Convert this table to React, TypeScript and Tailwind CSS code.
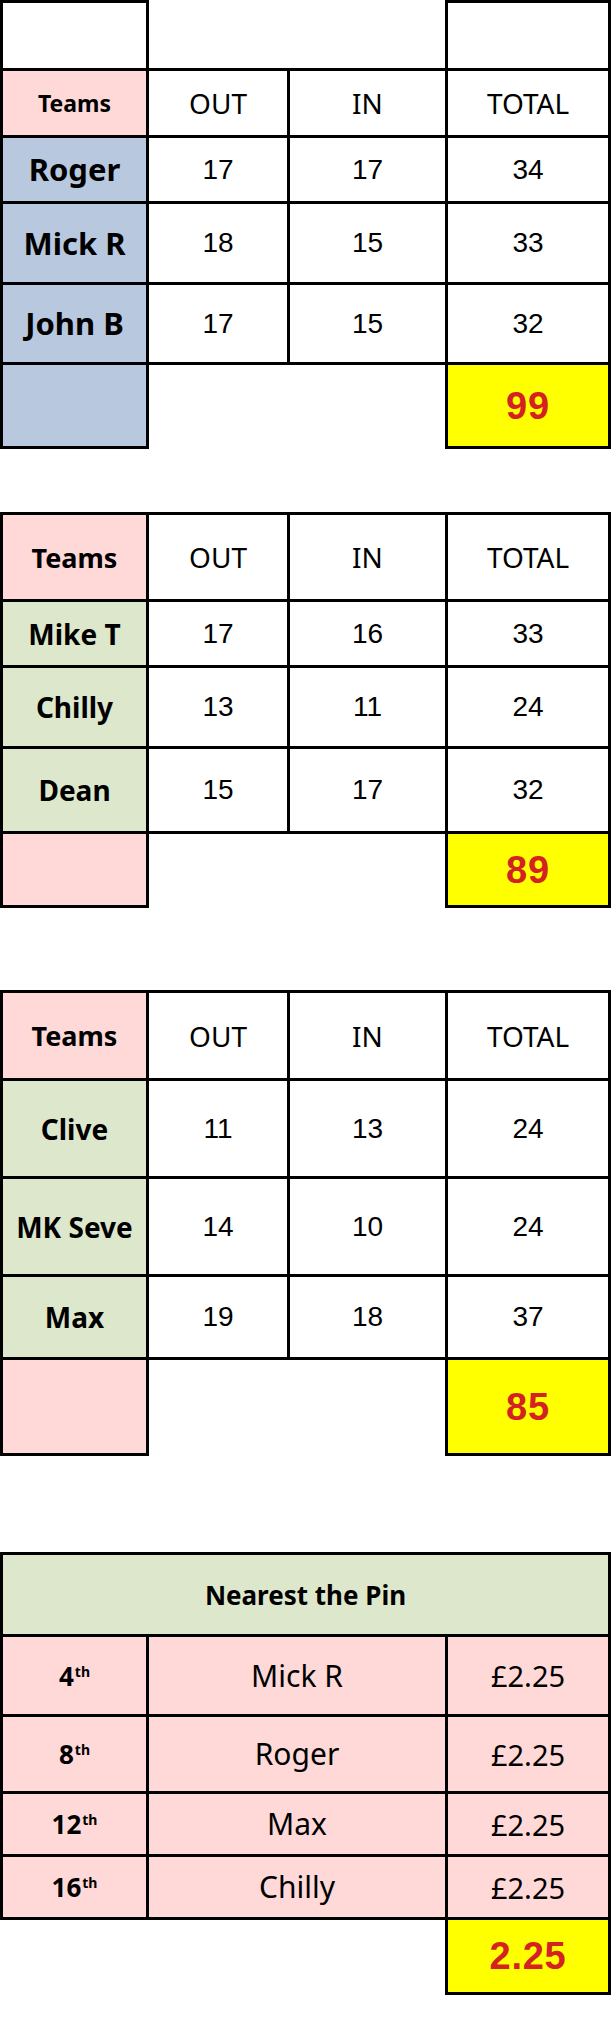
import React from "react";

const COMIC = "font-['Comic_Sans_MS','Noto_Sans',sans-serif]";
const ARIAL = "font-['Liberation_Sans',Arial,sans-serif]";

type CProps = { cls?: string; children?: React.ReactNode };
function C({ cls = "", children }: CProps) {
  return (
    <div className={`flex items-center justify-center border-black text-black ${cls}`}>
      {children}
    </div>
  );
}

const STD = "border-l-[3px] border-t-[3px]";
const LAST = "border-l-[3px] border-r-[3px] border-t-[3px]";
const PINK = "bg-[#ffd8d8]";
const BLUE = "bg-[#b8c9df]";
const GREEN = "bg-[#dde7cb]";
const YELLOW = "bg-[#ffff00]";

function Num({ children }: { children: React.ReactNode }) {
  return <span className={`${ARIAL} text-[28px] leading-none`}>{children}</span>;
}

function Red({ children }: { children: React.ReactNode }) {
  return (
    <span className={`${ARIAL} text-[38px] font-bold leading-none tracking-[0.02em] text-[#d42222]`}>
      {children}
    </span>
  );
}

function HeaderRow({ teamsSize }: { teamsSize: string }) {
  return (
    <>
      <C cls={`${STD} ${PINK}`}>
        <span className={`${COMIC} ${teamsSize} font-bold leading-none`}>Teams</span>
      </C>
      <C cls={STD}>
        <span className={`${COMIC} text-[28px] leading-none`}>OUT</span>
      </C>
      <C cls={STD}>
        <span className={`${COMIC} text-[28px] leading-none`}>IN</span>
      </C>
      <C cls={LAST}>
        <span className={`${COMIC} text-[28px] leading-none`}>TOTAL</span>
      </C>
    </>
  );
}

function DataRow({
  name,
  out,
  inn,
  total,
  bg,
  nameSize,
}: {
  name: string;
  out: string;
  inn: string;
  total: string;
  bg: string;
  nameSize: string;
}) {
  return (
    <>
      <C cls={`${STD} ${bg}`}>
        <span className={`${COMIC} ${nameSize} font-bold leading-none whitespace-nowrap`}>{name}</span>
      </C>
      <C cls={STD}>
        <Num>{out}</Num>
      </C>
      <C cls={STD}>
        <Num>{inn}</Num>
      </C>
      <C cls={LAST}>
        <Num>{total}</Num>
      </C>
    </>
  );
}

function TotalRow({ bg, total }: { bg: string; total: string }) {
  return (
    <>
      <C cls={`border-l-[3px] border-t-[3px] border-b-[3px] ${bg}`} />
      <C cls="col-span-2 border-l-[3px] border-t-[3px]" />
      <C cls={`border-[3px] ${YELLOW}`}>
        <Red>{total}</Red>
      </C>
    </>
  );
}

function Pin({ ord, name }: { ord: string; name: string }) {
  return (
    <>
      <C cls={`${STD} ${PINK}`}>
        <span className={`${COMIC} text-[26px] font-bold leading-none`}>
          {ord}
          <sup className="text-[14px] font-bold relative -top-[9px] ml-[1px]">th</sup>
        </span>
      </C>
      <C cls={`${STD} ${PINK}`}>
        <span className={`${COMIC} text-[30px] leading-none`}>{name}</span>
      </C>
      <C cls={`${LAST} ${PINK}`}>
        <span className={`${COMIC} text-[29px] leading-none`}>£2.25</span>
      </C>
    </>
  );
}

export default function App() {
  return (
    <div className="w-[614px] min-h-[2018px] bg-white">
      {/* Table 1 */}
      <div className="grid grid-cols-[146px_141px_158px_166px] grid-rows-[68px_67px_66px_81px_80px_87px]">
        <C cls="border-l-[3px] border-t-[3px]" />
        <C cls="col-span-2 border-l-[3px]" />
        <C cls="border-l-[3px] border-r-[3px] border-t-[3px]" />
        <HeaderRow teamsSize="text-[23px]" />
        <DataRow name="Roger" out="17" inn="17" total="34" bg={BLUE} nameSize="text-[31px]" />
        <DataRow name="Mick R" out="18" inn="15" total="33" bg={BLUE} nameSize="text-[31px]" />
        <DataRow name="John B" out="17" inn="15" total="32" bg={BLUE} nameSize="text-[31px]" />
        <TotalRow bg={BLUE} total="99" />
      </div>

      {/* Table 2 */}
      <div className="mt-[63px] grid grid-cols-[146px_141px_158px_166px] grid-rows-[87px_66px_81px_85px_77px]">
        <HeaderRow teamsSize="text-[27px]" />
        <DataRow name="Mike T" out="17" inn="16" total="33" bg={GREEN} nameSize="text-[28px]" />
        <DataRow name="Chilly" out="13" inn="11" total="24" bg={GREEN} nameSize="text-[28px]" />
        <DataRow name="Dean" out="15" inn="17" total="32" bg={GREEN} nameSize="text-[28px]" />
        <TotalRow bg={PINK} total="89" />
      </div>

      {/* Table 3 */}
      <div className="mt-[82px] grid grid-cols-[146px_141px_158px_166px] grid-rows-[88px_98px_98px_83px_99px]">
        <HeaderRow teamsSize="text-[27px]" />
        <DataRow name="Clive" out="11" inn="13" total="24" bg={GREEN} nameSize="text-[28px]" />
        <DataRow name="MK Seve" out="14" inn="10" total="24" bg={GREEN} nameSize="text-[28px]" />
        <DataRow name="Max" out="19" inn="18" total="37" bg={GREEN} nameSize="text-[28px]" />
        <TotalRow bg={PINK} total="85" />
      </div>

      {/* Table 4 */}
      <div className="mt-[96px] grid grid-cols-[146px_141px_158px_166px] grid-rows-[82px_80px_77px_63px_63px_78px]">
        <C cls={`col-span-4 border-l-[3px] border-r-[3px] border-t-[3px] ${GREEN}`}>
          <span className={`${COMIC} text-[26px] font-bold leading-none`}>Nearest the Pin</span>
        </C>
        <div className="col-span-4 grid grid-cols-[146px_299px_166px]">
          <Pin ord="4" name="Mick R" />
        </div>
        <div className="col-span-4 grid grid-cols-[146px_299px_166px]">
          <Pin ord="8" name="Roger" />
        </div>
        <div className="col-span-4 grid grid-cols-[146px_299px_166px]">
          <Pin ord="12" name="Max" />
        </div>
        <div className="col-span-4 grid grid-cols-[146px_299px_166px]">
          <Pin ord="16" name="Chilly" />
        </div>
        <div className="col-span-3 border-t-[3px] border-black" />
        <C cls={`border-[3px] ${YELLOW}`}>
          <Red>2.25</Red>
        </C>
      </div>
    </div>
  );
}
